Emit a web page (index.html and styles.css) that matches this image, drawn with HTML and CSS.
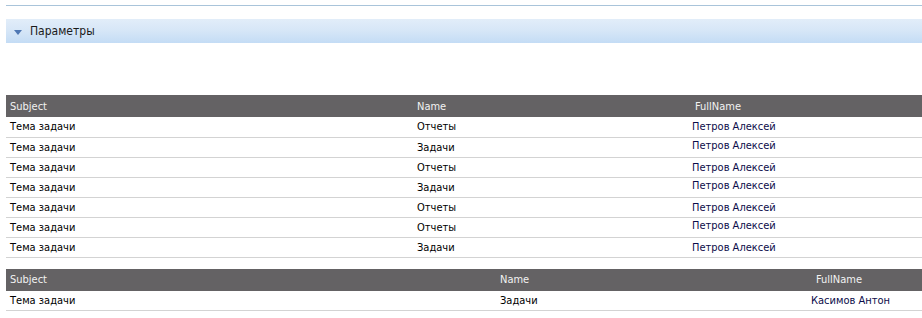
FILE: index.html
```html
<!DOCTYPE html>
<html lang="ru">
<head>
<meta charset="utf-8">
<title>Параметры</title>
<link rel="stylesheet" href="styles.css">
</head>
<body>
<div class="page">
  <div class="top-rule"></div>
  <div class="panel">
    <svg class="caret" width="8" height="5" viewBox="0 0 8 5"><path d="M0 0H8L4 5Z" fill="#4f78b4"/></svg>
    <span class="panel-title">Параметры</span>
  </div>

  <table class="grid grid-a">
    <thead>
      <tr><th class="c1">Subject</th><th class="c2">Name</th><th class="c3">FullName</th></tr>
    </thead>
    <tbody>
      <tr><td>Тема задачи</td><td>Отчеты</td><td class="fn">Петров Алексей</td></tr>
      <tr><td>Тема задачи</td><td>Задачи</td><td class="fn up">Петров Алексей</td></tr>
      <tr><td>Тема задачи</td><td>Отчеты</td><td class="fn">Петров Алексей</td></tr>
      <tr><td>Тема задачи</td><td>Задачи</td><td class="fn up">Петров Алексей</td></tr>
      <tr><td>Тема задачи</td><td>Отчеты</td><td class="fn">Петров Алексей</td></tr>
      <tr><td>Тема задачи</td><td>Отчеты</td><td class="fn up">Петров Алексей</td></tr>
      <tr><td>Тема задачи</td><td>Задачи</td><td class="fn">Петров Алексей</td></tr>
    </tbody>
  </table>

  <table class="grid grid-b">
    <thead>
      <tr><th class="c1">Subject</th><th class="c2">Name</th><th class="c3">FullName</th></tr>
    </thead>
    <tbody>
      <tr><td>Тема задачи</td><td>Задачи</td><td class="fn fn-b">Касимов Антон</td></tr>
    </tbody>
  </table>
</div>
</body>
</html>
```

FILE: styles.css
```css
html, body {
  margin: 0;
  padding: 0;
  background: #ffffff;
}
body {
  font-family: "DejaVu Sans Condensed", "DejaVu Sans", sans-serif;
  font-size: 11px;
  color: #000000;
}
.page {
  padding-left: 6px;
}
.top-rule {
  margin-top: 5px;
  height: 1px;
  background: #a9c4da;
}
.panel {
  margin-top: 13px;
  height: 24px;
  display: flex;
  align-items: center;
  padding-left: 8px;
  background: linear-gradient(to bottom, #e2edf9 0%, #d6e6f7 50%, #c4dcf5 100%);
}
.caret {
  display: block;
  margin-top: 2px;
}
.panel-title {
  margin-left: 8px;
  font-size: 12px;
  color: #1a1a1a;
}
.grid {
  width: 100%;
  border-collapse: collapse;
  table-layout: fixed;
}
.grid-a {
  margin-top: 52px;
}
.grid-b {
  margin-top: 11px;
}
.grid th {
  background: #646264;
  color: #f2f2f2;
  font-weight: normal;
  text-align: left;
  height: 22px;
  padding: 0 4px;
  box-sizing: border-box;
}
.grid td {
  height: 20px;
  padding: 0 4px;
  box-sizing: border-box;
  border-bottom: 1px solid #d3d3d3;
  white-space: nowrap;
}
.grid-a .c1 { width: 407px; }
.grid-a .c2 { width: 278px; }
.grid-b .c1 { width: 490px; }
.grid-b .c2 { width: 316px; }
.grid td.fn {
  color: #0c0c4a;
  padding-left: 1px;
}
.grid td.fn-b {
  padding-left: 0;
  text-indent: -1px;
}
.grid td.fn.up {
  vertical-align: top;
  padding-top: 1px;
}
```
